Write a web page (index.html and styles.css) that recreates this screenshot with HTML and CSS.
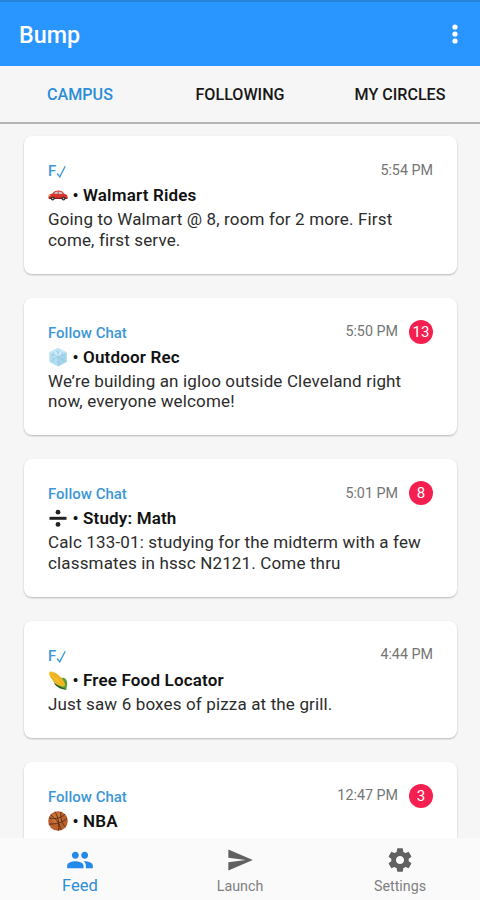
FILE: index.html
```html
<!DOCTYPE html>
<html lang="en">
<head>
    <meta charset="UTF-8">
    <meta name="viewport" content="width=device-width, initial-scale=1">
    <title>Bump</title>
    <link rel="stylesheet" href="styles.css">
</head>
<body>
    <div class="app">
        <header class="topbar">
            <h1>Bump</h1>
            <svg class="more" viewBox="0 0 6 20"><circle cx="3" cy="3" r="2.6"/><circle cx="3" cy="10" r="2.6"/><circle cx="3" cy="17" r="2.6"/></svg>
        </header>
        <nav class="tabs">
            <a class="tab active">CAMPUS</a>
            <a class="tab">FOLLOWING</a>
            <a class="tab">MY CIRCLES</a>
        </nav>
        <main class="feed">
            <div class="card">
                <div class="head">
                    <span class="follow short">F<svg class="check" viewBox="0 0 10 13"><path d="M1 8.500l2.800 3.400L9.200 1.200"/></svg></span>
                    <span class="time">5:54 PM</span>
                </div>
                <div class="title">
                    <svg class="emoji" viewBox="0 0 20 20">
                        <path d="M.5 11.500c0-2 1.500-2.500 4-3C6 6.500 7.500 5.600 10.500 5.600c3 0 4.200 1.200 5.700 3.100 2.500.3 3.500 1.300 3.500 4.300l-.8 1H1.200c-.7-.6-.7-1.500-.7-2.500z" fill="#d9352b"/>
                        <path d="M5.800 8.700c1.200-1.500 2.300-2.200 4-2.200v2.300zM10.700 6.500c2 0 3.200.8 4.200 2.300l-4.200.1z" fill="#c4d3d9"/>
                        <path d="M.6 12.700h19l-.6 1.300H1.200z" fill="#852019"/>
                        <circle cx="4.700" cy="13.500" r="2" fill="#35312f"/><circle cx="15.500" cy="13.500" r="2" fill="#35312f"/>
                        <circle cx="4.700" cy="13.500" r=".8" fill="#b8b8b8"/><circle cx="15.500" cy="13.500" r=".8" fill="#b8b8b8"/>
                        <path d="M.8 10.600h1.700" stroke="#f5c36b"/>
                    </svg>
                    <span class="dot">•</span>
                    <span class="name">Walmart Rides</span>
                </div>
                <p class="text">Going to Walmart @ 8, room for 2 more. First<br>come, first serve.</p>
            </div>
            <div class="card">
                <div class="head">
                    <span class="follow">Follow Chat</span>
                    <span class="time">5:50 PM</span>
                    <span class="badge">13</span>
                </div>
                <div class="title">
                    <svg class="emoji" viewBox="0 0 20 20">
                        <path d="M10 .8l8.600 4.500v9.600L10 19.500l-8.600-4.600V5.300z" fill="#b5dff2"/>
                        <path d="M10 .8l8.600 4.500L10 10 1.400 5.300z" fill="#c9eafa"/>
                        <path d="M10 10l8.600-4.700v9.600L10 19.500z" fill="#a6d5ec"/>
                        <path d="M10 2v16M3 6l14 8M17 6L3 14M7.500 3.500L10 6l2.500-2.500M7.500 16.500L10 14l2.500 2.500M3 9l3-1-.5-3M17 9l-3-1 .5-3M3 11l3 1-.5 3M17 11l-3 1 .5 3" fill="none" stroke="#92c6e2" stroke-width=".6"/>
                    </svg>
                    <span class="dot">•</span>
                    <span class="name">Outdoor Rec</span>
                </div>
                <p class="text">We’re building an igloo outside Cleveland right<br>now, everyone welcome!</p>
            </div>
            <div class="card">
                <div class="head">
                    <span class="follow">Follow Chat</span>
                    <span class="time">5:01 PM</span>
                    <span class="badge">8</span>
                </div>
                <div class="title">
                    <svg class="emoji" viewBox="0 0 20 20"><path d="M1.500 8.800h17v3h-17z" fill="#222"/><circle cx="10" cy="4.200" r="2.400" fill="#222"/><circle cx="10" cy="16.400" r="2.400" fill="#222"/></svg>
                    <span class="dot">•</span>
                    <span class="name">Study: Math</span>
                </div>
                <p class="text">Calc 133-01: studying for the midterm with a few<br>classmates in hssc N2121. Come thru</p>
            </div>
            <div class="card">
                <div class="head">
                    <span class="follow short">F<svg class="check" viewBox="0 0 10 13"><path d="M1 8.500l2.800 3.400L9.200 1.200"/></svg></span>
                    <span class="time">4:44 PM</span>
                </div>
                <div class="title">
                    <svg class="emoji" viewBox="0 0 20 20">
                        <path d="M4 7c1 6 5.500 11.500 14.500 12.700-.3-1.500.2-2 .2-3 1-3 .7-6.500-2.200-8.700z" fill="#589b34"/>
                        <path d="M6 13c2.500 4 6.500 6.200 12.500 6.700-2-1.700-5-2.200-6.500-3.300z" fill="#28591f"/>
                        <path d="M1.300 2.200C3 .8 7 2 10.500 5c4 3.400 7 7.500 6.500 11-3.500 1.500-8.500-1-12-5C2.500 7.700.5 4 1.300 2.200z" fill="#f5bd26"/>
                        <path d="M3 3.500c4 2 8.500 6 12 11M2.500 6c3 3.500 6 6.500 10.500 9M6.500 3.500c4 2.500 7 5.500 9 9" fill="none" stroke="#d7951b" stroke-width=".6"/>
                    </svg>
                    <span class="dot">•</span>
                    <span class="name">Free Food Locator</span>
                </div>
                <p class="text">Just saw 6 boxes of pizza at the grill.</p>
            </div>
            <div class="card">
                <div class="head">
                    <span class="follow">Follow Chat</span>
                    <span class="time">12:47 PM</span>
                    <span class="badge">3</span>
                </div>
                <div class="title">
                    <svg class="emoji" viewBox="0 0 20 20">
                        <circle cx="10" cy="10" r="9.800" fill="#b9602c"/>
                        <circle cx="9" cy="7" r="5.500" fill="#ca7439"/>
                        <path d="M1 7c6 1.500 13 0 16-4M.8 13C8 13.500 15 11 19 7.500M7 .8c3 5 4.500 11 3.500 18.800M2.500 4c5 3 9 8 10.500 15M13 .8c-1 7 1 12 4.500 15" fill="none" stroke="#552b19" stroke-width=".9"/>
                    </svg>
                    <span class="dot">•</span>
                    <span class="name">NBA</span>
                </div>
            </div>
        </main>
        <footer class="bottombar">
            <a class="item active">
                <svg class="icon" viewBox="0 0 24 24"><path d="M16 11c1.660 0 2.990-1.340 2.990-3S17.660 5 16 5s-3 1.340-3 3 1.340 3 3 3zM8 11c1.660 0 2.990-1.340 2.990-3S9.660 5 8 5 5 6.340 5 8s1.340 3 3 3zM8 13c-2.330 0-7 1.170-7 3.500V19h14v-2.500c0-2.330-4.670-3.500-7-3.500zM16 13c-.29 0-.62.020-.97.050 1.160.84 1.970 1.970 1.970 3.450V19h6v-2.500c0-2.330-4.670-3.500-7-3.500z"/></svg>
                <span>Feed</span>
            </a>
            <a class="item">
                <svg class="icon" viewBox="0 0 24 24"><path d="M2.010 21L23 12 2.010 3 2 10l15 2-15 2z"/></svg>
                <span>Launch</span>
            </a>
            <a class="item">
                <svg class="icon" viewBox="0 0 24 24"><path d="M19.430 12.980c.04-.32.07-.64.07-.98s-.03-.66-.07-.98l2.110-1.650c.19-.15.24-.42.12-.64l-2-3.460c-.12-.22-.39-.3-.61-.22l-2.490 1c-.52-.4-1.080-.73-1.690-.98l-.38-2.650C14.460 2.180 14.250 2 14 2h-4c-.25 0-.46.18-.49.42l-.38 2.650c-.61.25-1.170.59-1.690.98l-2.490-1c-.23-.09-.49 0-.61.22l-2 3.460c-.13.22-.07.49.12.64l2.110 1.650c-.04.32-.07.65-.07.98s.03.66.07.98l-2.110 1.650c-.19.15-.24.42-.12.64l2 3.460c.12.22.39.3.61.22l2.490-1c.52.4 1.080.73 1.690.98l.38 2.650c.03.24.24.42.49.42h4c.25 0 .46-.18.49-.42l.38-2.650c.61-.25 1.170-.59 1.690-.98l2.490 1c.23.09.49 0 .61-.22l2-3.460c.12-.22.07-.49-.12-.64l-2.110-1.650zM12 15.500c-1.930 0-3.500-1.570-3.500-3.500s1.570-3.500 3.500-3.500 3.500 1.570 3.500 3.500-1.570 3.500-3.500 3.500z"/></svg>
                <span>Settings</span>
            </a>
        </footer>
    </div>
</body>
</html>
```

FILE: styles.css
```css
* {
    box-sizing: border-box;
}
body {
    margin: 0;
    background: #f6f6f6;
    font-family: Roboto, "Liberation Sans", sans-serif;
}
.app {
    height: 900px;
    display: flex;
    flex-direction: column;
    overflow: hidden;
}
.topbar {
    height: 66px;
    flex: none;
    display: flex;
    align-items: center;
    justify-content: space-between;
    padding: 0 22px 0 19px;
    background: #2995fe;
    border-top: 2px solid #2583d9;
    color: #fff;
}
.topbar h1 {
    margin: 2px 0 0;
    font-size: 23.3px;
    font-weight: 500;
}
.more {
    width: 6px;
    height: 20px;
    fill: #fff;
}
.tabs {
    height: 58px;
    flex: none;
    display: grid;
    grid-template-columns: repeat(3, 1fr);
    align-items: center;
    border-bottom: 2px solid #b4b4b4;
    color: #181818;
}
.tab {
    text-align: center;
    font-size: 16.1px;
    font-weight: 500;
}
.tab.active {
    color: #2b8ed8;
}
.feed {
    flex: 1;
    min-height: 0;
    overflow: hidden;
    display: flex;
    flex-direction: column;
    gap: 24px;
    padding: 12px 23px 0 24px;
}
.card {
    flex: none;
    padding: 24px 24px 23.5px;
    background: #fff;
    border-radius: 8px;
    box-shadow: 0 1px 2px rgba(0, 0, 0, .25);
}
.head {
    height: 20px;
    display: flex;
    align-items: center;
}
.follow {
    flex: 1;
    color: #3c97d8;
    font-size: 15px;
    font-weight: 500;
    line-height: 20px;
    padding-top: 2px;
}
.check {
    width: 10px;
    height: 13px;
    vertical-align: -2px;
    fill: none;
    stroke: #3c97d8;
    stroke-width: 1.3;
}
.time {
    color: #757575;
    font-size: 14.3px;
    line-height: 18px;
    padding-bottom: 1px;
}
.badge {
    width: 24px;
    height: 24px;
    margin-left: 11px;
    border-radius: 50%;
    background: #f5204f;
    color: #fff;
    font-size: 15px;
    line-height: 25px;
    text-align: center;
}
.title {
    height: 24px;
    margin-top: 3px;
    display: flex;
    align-items: center;
    color: #111;
    font-size: 17px;
    font-weight: 600;
    letter-spacing: .17px;
}
.emoji {
    width: 20px;
    height: 20px;
}
.dot {
    width: 15px;
    text-align: center;
}
.text {
    margin: 2px 0 0;
    color: #2c2c2c;
    font-size: 17px;
    letter-spacing: .15px;
    line-height: 20.5px;
    white-space: nowrap;
}
.bottombar {
    height: 62px;
    flex: none;
    display: grid;
    grid-template-columns: repeat(3, 1fr);
    background: #fafafa;
    color: #808080;
}
.item {
    display: flex;
    flex-direction: column;
    align-items: center;
    padding-top: 8px;
    font-size: 14.3px;
    line-height: 20px;
}
.item span {
    margin-top: 2px;
}
.item.active {
    color: #2b8ed8;
    font-size: 16.5px;
}
.icon {
    width: 28px;
    height: 28px;
    fill: #616161;
}
.item.active .icon {
    fill: #2489e8;
}
```
